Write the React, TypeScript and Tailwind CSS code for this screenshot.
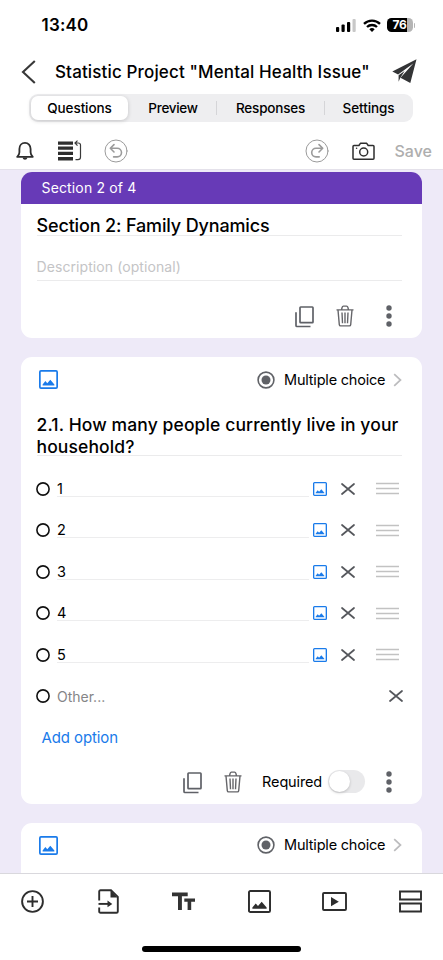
import React from "react";

const Bell = () => (
  <svg width="18" height="20" viewBox="0 0 18 20" fill="none" stroke="#2e2e2e" strokeWidth="1.8" strokeLinejoin="round">
    <path d="M1.2 15.8h15.6c-1.7-1.5-2.2-2.7-2.2-4.6V8c0-3.5-2.3-6.1-5.6-6.1S3.4 4.500 3.400 8v3.200c0 1.900-.5 3.100-2.200 4.600Z" />
    <path d="M6.600 16.600c.3 1.500 1.200 2.200 2.400 2.200s2.100-.7 2.400-2.200Z" fill="#2e2e2e" stroke="none" />
  </svg>
);

const Reorder = () => (
  <svg width="25" height="22" viewBox="0 0 25 22" fill="none">
    <path d="M1 1.500h15v3.300H1zM1 6.600h15v3.200H1zM1 11.700h15V15H1zM1 16.900h15v3.500H1z" fill="#2e2e2e" />
    <path d="M18 3h3.200c1.500 0 2.300.7 2.300 2v12.200c0 1.600-.8 2.400-2.500 2.400h-2.500M20.500 .6 18 3l2.500 2.600" stroke="#3a3a3a" strokeWidth="1.200" />
  </svg>
);

const Undo = ({ flip = false }: { flip?: boolean }) => (
  <svg width="24" height="24" viewBox="0 0 24 24" fill="none" stroke="#9b9b9b" strokeLinecap="round" strokeLinejoin="round">
    <circle cx="12" cy="12" r="11" strokeWidth="1" />
    {flip ? (
      <path d="M17.500 9.300H11a4.300 4.300 0 0 0 0 8.600h3.200M14 5.600l3.700 3.700L14 13" strokeWidth="1.600" />
    ) : (
      <path d="M6.500 9.300h6.700a4.300 4.300 0 0 1 0 8.600H9.600M10 5.600 6.300 9.300 10 13" strokeWidth="1.600" />
    )}
  </svg>
);

const Camera = () => (
  <svg width="23" height="19" viewBox="0 0 23 19" fill="none" stroke="#2e2e2e" strokeWidth="1.500" strokeLinejoin="round">
    <path d="M2 3.500h4.900l1.500-2.200h6.300l1.500 2.200H21c.6 0 1 .4 1 1v11.700c0 .6-.4 1-1 1H2c-.6 0-1-.4-1-1V4.500c0-.6.4-1 1-1Z" />
    <circle cx="11.700" cy="10" r="4" />
    <circle cx="4.600" cy="6.300" r=".8" fill="#2e2e2e" stroke="none" />
  </svg>
);

const Picture = ({ size, color, stroke = 1.8 }: { size: number; color: string; stroke?: number }) => (
  <svg width={size} height={size} viewBox="0 0 20 20" fill="none" className="shrink-0">
    <rect x={stroke / 2} y={stroke / 2} width={20 - stroke} height={20 - stroke} rx="1.200" stroke={color} strokeWidth={stroke} />
    <path d="M3.800 16.200v-1L6.700 11.700l2 2.200 3.200-3.600 4.300 4.900v1Z" fill={color} />
  </svg>
);

const Copy = () => (
  <svg width="19" height="22" viewBox="0 0 19 22" fill="none" stroke="#5f6167" strokeWidth="1.700" strokeLinejoin="round">
    <rect x="5" y="1" width="13" height="15.600" rx=".7" />
    <path d="M1 6.200v13.200c0 .7.4 1.100 1 1.100h13.500" />
  </svg>
);

const Trash = () => (
  <svg width="18" height="22" viewBox="0 0 18 22" fill="none" stroke="#66666a" strokeWidth="1.400" strokeLinejoin="round">
    <path d="M.5 4.900h17M5.500 4.700l.7-2.600c.2-.7.5-1 1.200-1h3.200c.7 0 1 .3 1.200 1l.7 2.600M2 5l1.300 14.600c.1.900.5 1.300 1.300 1.300h8.800c.8 0 1.200-.4 1.300-1.300L16 5" />
    <path d="M6 7.500l.5 10.800M9 7.500v10.800M12 7.500l-.5 10.800" />
  </svg>
);

const Dots = () => (
  <svg width="6" height="22" viewBox="0 0 6 22" fill="#5f6167">
    <circle cx="3" cy="3" r="2.700" />
    <circle cx="3" cy="11" r="2.700" />
    <circle cx="3" cy="19" r="2.700" />
  </svg>
);

const Cross = () => (
  <svg width="14" height="12" viewBox="0 0 14 12" fill="none" stroke="#55575c" strokeWidth="1.700" strokeLinecap="round" className="shrink-0">
    <path d="M1 1l12 10M13 1 1 11" />
  </svg>
);

const QuestionType = () => (
  <div className="flex h-[45px] items-center pl-[18px] pr-[20px]">
    <Picture size={19} color="#1a7bea" />
    <svg width="18" height="18" viewBox="0 0 18 18" className="ml-auto" fill="none">
      <circle cx="9" cy="9" r="7.900" stroke="#606267" strokeWidth="1.600" />
      <circle cx="9" cy="9" r="4.500" fill="#606267" />
    </svg>
    <span className="ml-[9px] w-[101px] whitespace-nowrap text-[14.5px] tracking-[-0.2px]">Multiple choice</span>
    <svg width="9" height="14" viewBox="0 0 9 14" fill="none" stroke="#bcbcbe" strokeWidth="1.700" className="ml-[8px]">
      <path d="M1.200 1.200 7.500 7l-6.300 5.800" />
    </svg>
  </div>
);

const Radio = () => (
  <svg width="14" height="14" viewBox="0 0 14 14" fill="none" stroke="#111" strokeWidth="1.600" className="shrink-0">
    <circle cx="7" cy="7" r="6.100" />
  </svg>
);

const Handle = () => (
  <svg width="23" height="13" viewBox="0 0 23 13" stroke="#c2c2c2" strokeWidth="1.400" className="ml-[21px]">
    <path d="M0 1.500h23M0 6.500h23M0 11.500h23" />
  </svg>
);

const Option = ({ label }: { label: string }) => (
  <div className="flex h-[41.5px] items-center">
    <Radio />
    <div className="ml-[7px] flex h-[16px] w-[252px] items-center border-b border-[#ededee] pt-px text-[14.5px]">{label}</div>
    <div className="ml-[4px] flex items-center">
      <Picture size={14} color="#1a7bea" stroke={1.900} />
    </div>
    <div className="ml-[14px] flex">
      <Cross />
    </div>
    <Handle />
  </div>
);

export default function App() {
  return (
    <div className="flex h-[960px] w-[443px] flex-col overflow-hidden bg-white font-['Inter','Liberation_Sans',sans-serif] text-black">
      <header className="flex h-[170px] shrink-0 flex-col border-b border-[#e4e1ea]">
        <div className="flex h-[50px] shrink-0 items-center pl-[41.500px] pr-[28px]">
          <span className="pt-[2px] text-[17px] font-semibold tracking-[0.2px]">13:40</span>
          <svg width="20" height="13" viewBox="0 0 20 13" className="ml-auto">
            <rect y="8" width="3.200" height="5" rx="1" />
            <rect x="5.500" y="5.500" width="3.200" height="7.500" rx="1" />
            <rect x="11" y="3" width="3.200" height="10" rx="1" />
            <rect x="16.500" width="3.200" height="13" rx="1" fill="#c8c8c8" />
          </svg>
          <svg width="18" height="13" viewBox="0 0 18 13" className="ml-[7px]" fill="none" stroke="#000" strokeWidth="2.300">
            <path d="M1 4.800a11.500 11.500 0 0 1 16 0M4 8a7.200 7.200 0 0 1 10 0" />
            <path d="M6.300 10.200a4 4 0 0 1 5.400 0L9 12.900Z" fill="#000" stroke="none" />
          </svg>
          <div className="ml-[6px] flex h-[14.500px] w-[26px] items-center justify-center rounded-[4.500px] bg-linear-to-r from-black from-76% to-[#b5b5b5] to-76% text-[12px] font-bold tracking-[-0.4px] text-white">
            76
          </div>
          <span className="ml-px h-[5px] w-[1.500px] rounded-r-full bg-[#b5b5b5]" />
        </div>
        <div className="flex h-[44px] shrink-0 items-center pl-[21px] pr-[26px]">
          <svg width="15" height="24" viewBox="0 0 15 24" fill="none" stroke="#383838" strokeWidth="2.100">
            <path d="M13.800 1 2 12l11.800 11" />
          </svg>
          <h1 className="ml-[19px] whitespace-nowrap pt-px text-[17px] font-medium tracking-[0.140px]">Statistic Project "Mental Health Issue"</h1>
          <svg width="25" height="25" viewBox="0 0 25 25" className="-mt-[2px] ml-auto" fill="#333436">
            <path d="M24.500 .3.300 12.600l5.800 2.900L21.500 4.200 8.500 18.800l9.800 5.300Z" />
            <path d="M6.600 16.200v6.600l1.500-3.500 4.500-7.300Z" />
          </svg>
        </div>
        <nav className="ml-[29px] flex h-[28px] w-[384px] shrink-0 items-center rounded-[9px] bg-[#eeeef0] text-[13.500px] font-medium tracking-[-0.1px]">
          <span className="ml-[2px] flex h-[24px] w-[97px] items-center justify-center rounded-[7px] bg-white shadow-[0_1px_4px_rgba(0,0,0,0.18)]">Questions</span>
          <span className="flex w-[88px] items-center justify-center pl-[2px] tracking-[-0.3px]">Preview</span>
          <span className="h-[14px] w-px bg-[#d5d5d8]" />
          <span className="flex w-[107px] items-center justify-center tracking-[-0.2px]">Responses</span>
          <span className="h-[14px] w-px bg-[#d5d5d8]" />
          <span className="flex w-[87px] items-center justify-center">Settings</span>
        </nav>
        <div className="flex h-[47px] shrink-0 items-center pl-[16px] pr-[11px] pt-[11px]">
          <Bell />
          <div className="-mt-px ml-[23px]"><Reorder /></div>
          <div className="ml-[22px]"><Undo /></div>
          <div className="ml-auto"><Undo flip /></div>
          <div className="ml-[23px]"><Camera /></div>
          <span className="ml-[20px] text-[16px] font-medium text-[#aeaeae]">Save</span>
        </div>
      </header>

      <main className="flex h-[703px] shrink-0 flex-col overflow-hidden bg-[#eeeaf8] px-[21px] pt-[2px]">
        <section className="h-[166px] w-[401px] shrink-0 overflow-hidden rounded-[11px] bg-white">
          <div className="flex h-[31.500px] items-center bg-[#673ab7] pl-[20.500px] text-[14px] tracking-[0.150px] text-white">Section 2 of 4</div>
          <div className="ml-[15.500px] mr-[20px] flex h-[32px] items-center border-b border-[#ebebec] pt-[13px] text-[18px] font-medium tracking-[-0.150px]">
            <span className="whitespace-nowrap">Section 2: Family Dynamics</span>
          </div>
          <div className="ml-[15.500px] mr-[20px] flex h-[45px] items-center border-b border-[#ebebec] pt-[17px] text-[14px] tracking-[0.080px] text-[#c4c4c6]">Description (optional)</div>
          <div className="flex h-[70px] items-center justify-end pr-[30px]">
            <div className="mt-[3px]"><Copy /></div>
            <div className="ml-[22px]"><Trash /></div>
            <div className="ml-[32px]"><Dots /></div>
          </div>
        </section>

        <section className="mt-[19px] h-[446.500px] w-[401px] shrink-0 rounded-[11px] bg-white">
          <QuestionType />
          <h2 className="ml-[15.500px] mr-[20px] h-[54px] whitespace-nowrap border-b border-[#ebebec] pt-[11.500px] text-[17.500px] font-medium leading-[22px] tracking-[0.110px]">
            2.1. How many people currently live in your
            <br />
            household?
          </h2>
          <div className="ml-[15px] mt-[12px]">
            {["1", "2", "3", "4", "5"].map((label) => (
              <Option key={label} label={label} />
            ))}
            <div className="flex h-[41.500px] items-center pr-[19px]">
              <Radio />
              <span className="ml-[7px] text-[14px] text-[#858587]">Other...</span>
              <div className="ml-auto"><Cross /></div>
            </div>
            <div className="flex h-[41.500px] items-center pl-[5.500px] text-[15px] tracking-[-0.100px] text-[#1a7bea]">Add option</div>
          </div>
          <div className="flex h-[46px] items-center justify-end pr-[30px]">
            <div className="mt-[3px]"><Copy /></div>
            <div className="ml-[22px]"><Trash /></div>
            <span className="ml-[20px] text-[14.500px] tracking-[-0.150px]">Required</span>
            <div className="ml-[6px] flex h-[23px] w-[37px] items-center rounded-full bg-[#e9e9eb] px-[1px]">
              <span className="size-[21px] rounded-full bg-white shadow-[0_1px_3px_rgba(0,0,0,0.2)]" />
            </div>
            <div className="ml-[21px]"><Dots /></div>
          </div>
        </section>

        <section className="mt-[19px] h-[80px] w-[401px] shrink-0 rounded-t-[11px] bg-white">
          <QuestionType />
        </section>
      </main>

      <footer className="flex h-[87px] flex-col items-center border-t border-[#d9d8dd]">
        <div className="flex h-[55px] w-full items-center justify-between pl-[20px] pr-[20px]">
          <div className="flex w-[25px] justify-center">
            <svg width="23" height="23" viewBox="0 0 23 23" fill="none" stroke="#2e2e2e" strokeWidth="1.900">
              <circle cx="11.500" cy="11.500" r="10.400" />
              <path d="M11.500 6v11M6 11.500h11" />
            </svg>
          </div>
          <div className="flex w-[25px] justify-center">
            <svg width="21" height="25" viewBox="0 0 21 25" fill="none" stroke="#2e2e2e" strokeWidth="1.900">
              <path d="M1.200 11.500V2.500c0-.8.5-1.300 1.300-1.300H13l6.800 6.600v14.700c0 .8-.5 1.300-1.300 1.300h-16c-.8 0-1.300-.5-1.300-1.300V18.500" />
              <path d="M.5 14.900h10" />
              <path d="M9.500 11.600v6.600l4.800-3.300ZM12.500 1.500v7h7Z" fill="#2e2e2e" stroke="none" />
            </svg>
          </div>
          <div className="flex w-[25px] justify-center">
            <svg width="23" height="19" viewBox="0 0 23 19" fill="#333">
              <path d="M0 .5h15.700v3.700H9.900V18H6V4.200H0ZM12.300 6.400H23v3.400h-3.800V18h-3.600V9.800h-3.300Z" />
            </svg>
          </div>
          <div className="flex w-[25px] justify-center">
            <Picture size={23} color="#2e2e2e" stroke={1.700} />
          </div>
          <div className="flex w-[25px] justify-center">
            <svg width="25" height="19" viewBox="0 0 25 19" fill="none">
              <rect x="1" y="1" width="23" height="17" rx="1" stroke="#2e2e2e" strokeWidth="1.900" />
              <path d="M9 5v9.300l7.800-4.600Z" fill="#2e2e2e" />
            </svg>
          </div>
          <div className="flex w-[25px] justify-center">
            <svg width="23" height="23" viewBox="0 0 23 23" fill="none" stroke="#2e2e2e" strokeWidth="1.900">
              <path d="M1 1.500h21v8H1zM1 13.500h21v8H1z" />
            </svg>
          </div>
        </div>
        <div className="mt-[17px] h-[6px] w-[159px] rounded-full bg-black" />
      </footer>
    </div>
  );
}
